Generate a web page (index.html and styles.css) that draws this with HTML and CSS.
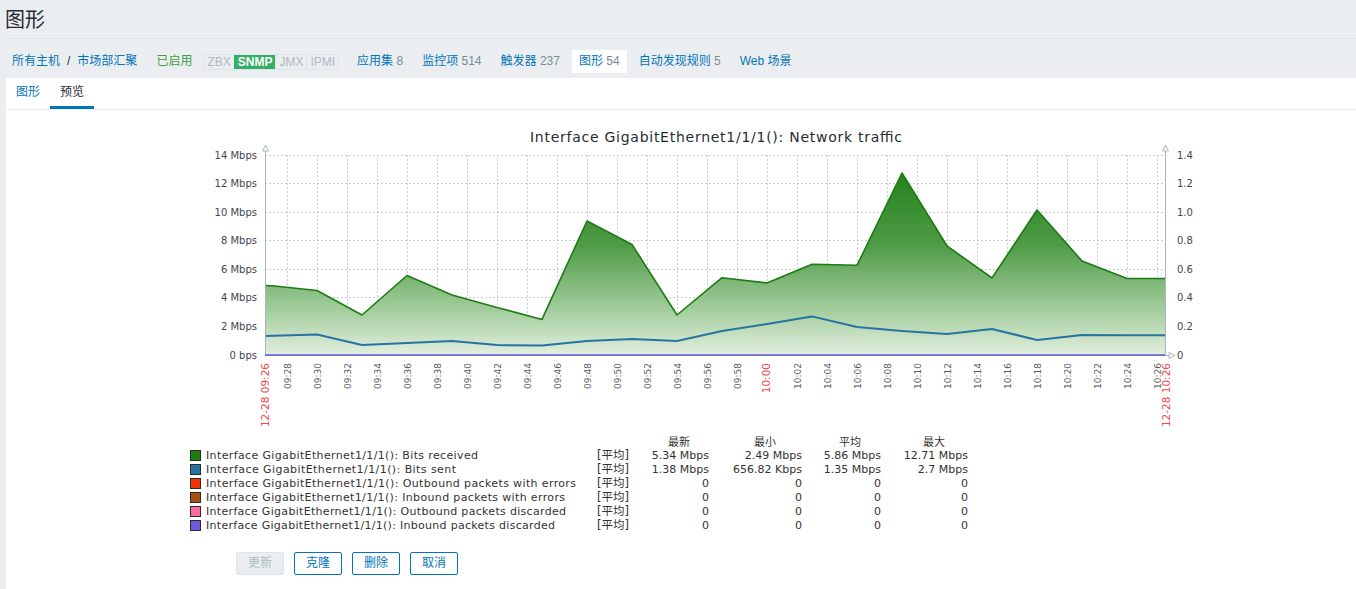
FILE: index.html
```html
<!DOCTYPE html>
<html lang="zh">
<head>
<meta charset="utf-8">
<title>图形</title>
<link rel="stylesheet" href="styles.css">
</head>
<body>
<header class="page-header"><h1>图形</h1></header>
<ul class="host-nav">
  <li class="crumbs"><a href="#">所有主机</a><span class="sep">/</span><a href="#">市场部汇聚</a></li>
  <li><span class="green">已启用</span></li>
  <li class="status-item"><span class="status"><span class="tag">ZBX</span><span class="tag on">SNMP</span><span class="tag">JMX</span><span class="tag">IPMI</span></span></li>
  <li><a href="#">应用集</a> <span class="num">8</span></li>
  <li><a href="#">监控项</a> <span class="num">514</span></li>
  <li><a href="#">触发器</a> <span class="num">237</span></li>
  <li class="active"><a href="#">图形</a> <span class="num">54</span></li>
  <li><a href="#">自动发现规则</a> <span class="num">5</span></li>
  <li><a href="#">Web 场景</a></li>
</ul>
<main class="panel">
  <ul class="tabs">
    <li><a href="#">图形</a></li>
    <li class="current"><span>预览</span></li>
  </ul>
  <div class="graph-wrap">
    <svg class="chart" width="1030" height="423" viewBox="180 112 1030 423" xmlns="http://www.w3.org/2000/svg">
      <defs>
        <linearGradient id="fillGreen" gradientUnits="userSpaceOnUse" x1="0" y1="155" x2="0" y2="355">
          <stop offset="0" stop-color="#1a7c11"/>
          <stop offset="0.45" stop-color="#4f9b47"/>
          <stop offset="0.8" stop-color="#aad1a4"/>
          <stop offset="1" stop-color="#e2efdf"/>
        </linearGradient>
      </defs>
      <text class="g-title" x="716" y="142" text-anchor="middle" textLength="372" lengthAdjust="spacing">Interface GigabitEthernet1/1/1(): Network traffic</text>

      <path class="grid" d="M265 155.5H1165M265 183.5H1165M265 212.5H1165M265 240.5H1165M265 269.5H1165M265 297.5H1165M265 326.5H1165
        M287.5 155V355M317.5 155V355M347.5 155V355M377.5 155V355M407.5 155V355M437.5 155V355M467.5 155V355M497.5 155V355M527.5 155V355M557.5 155V355
        M587.5 155V355M617.5 155V355M647.5 155V355M677.5 155V355M707.5 155V355M737.5 155V355M767.5 155V355M797.5 155V355M827.5 155V355M857.5 155V355
        M887.5 155V355M917.5 155V355M947.5 155V355M977.5 155V355M1007.5 155V355M1037.5 155V355M1067.5 155V355M1097.5 155V355M1127.5 155V355M1157.5 155V355"/>

      <path class="area" d="M265 355L265 285.5L272 285.7L317 290.5L362 315L407 275.5L452 295L497 307.5L542 319.4L587 221L632 244.5L677 315L722 277.7L767 283L812 264.3L857 265.3L902 173L947 246L992 278L1037 210L1082 261L1127 278.5L1165 278.5L1165 355Z"/>
      <polyline class="line-green" points="265,285.5 272,285.7 317,290.5 362,315 407,275.5 452,295 497,307.5 542,319.4 587,221 632,244.5 677,315 722,277.7 767,283 812,264.3 857,265.3 902,173 947,246 992,278 1037,210 1082,261 1127,278.5 1165,278.5"/>
      <polyline class="line-blue" points="265,336 317,334.5 362,345 407,343 452,341 497,345 542,345.6 587,341 632,339 677,341 722,331 767,324 812,316.4 857,327 902,331 947,334 992,329 1037,340 1082,335 1127,335.3 1165,335.3"/>

      <path class="axis" d="M265.5 148V356M1165.5 148V356M265 355.5H1169"/>
      <path class="arrow" d="M262.5 151L265.5 145L268.5 151ZM1162.5 151L1165.5 145L1168.5 151ZM1169 352.5L1175 355.5L1169 358.5Z"/>
      <path class="line-zero" d="M265 355H1165"/>

      <g class="ylab" text-anchor="end">
        <text x="257" y="159">14 Mbps</text>
        <text x="257" y="187">12 Mbps</text>
        <text x="257" y="216">10 Mbps</text>
        <text x="257" y="244">8 Mbps</text>
        <text x="257" y="273">6 Mbps</text>
        <text x="257" y="301">4 Mbps</text>
        <text x="257" y="330">2 Mbps</text>
        <text x="257" y="359">0 bps</text>
      </g>
      <g class="ylab">
        <text x="1177" y="159">1.4</text>
        <text x="1177" y="187">1.2</text>
        <text x="1177" y="216">1.0</text>
        <text x="1177" y="244">0.8</text>
        <text x="1177" y="273">0.6</text>
        <text x="1177" y="301">0.4</text>
        <text x="1177" y="330">0.2</text>
        <text x="1177" y="359">0</text>
      </g>

      <g class="xlab" text-anchor="end">
        <text transform="translate(290.7 363) rotate(-90)">09:28</text>
        <text transform="translate(320.7 363) rotate(-90)">09:30</text>
        <text transform="translate(350.7 363) rotate(-90)">09:32</text>
        <text transform="translate(380.7 363) rotate(-90)">09:34</text>
        <text transform="translate(410.7 363) rotate(-90)">09:36</text>
        <text transform="translate(440.7 363) rotate(-90)">09:38</text>
        <text transform="translate(470.7 363) rotate(-90)">09:40</text>
        <text transform="translate(500.7 363) rotate(-90)">09:42</text>
        <text transform="translate(530.7 363) rotate(-90)">09:44</text>
        <text transform="translate(560.7 363) rotate(-90)">09:46</text>
        <text transform="translate(590.7 363) rotate(-90)">09:48</text>
        <text transform="translate(620.7 363) rotate(-90)">09:50</text>
        <text transform="translate(650.7 363) rotate(-90)">09:52</text>
        <text transform="translate(680.7 363) rotate(-90)">09:54</text>
        <text transform="translate(710.7 363) rotate(-90)">09:56</text>
        <text transform="translate(740.7 363) rotate(-90)">09:58</text>
        <text transform="translate(800.7 363) rotate(-90)">10:02</text>
        <text transform="translate(830.7 363) rotate(-90)">10:04</text>
        <text transform="translate(860.7 363) rotate(-90)">10:06</text>
        <text transform="translate(890.7 363) rotate(-90)">10:08</text>
        <text transform="translate(920.7 363) rotate(-90)">10:10</text>
        <text transform="translate(950.7 363) rotate(-90)">10:12</text>
        <text transform="translate(980.7 363) rotate(-90)">10:14</text>
        <text transform="translate(1010.7 363) rotate(-90)">10:16</text>
        <text transform="translate(1040.7 363) rotate(-90)">10:18</text>
        <text transform="translate(1070.7 363) rotate(-90)">10:20</text>
        <text transform="translate(1100.7 363) rotate(-90)">10:22</text>
        <text transform="translate(1130.7 363) rotate(-90)">10:24</text>
        <text transform="translate(1160.7 363) rotate(-90)">10:26</text>
      </g>
      <g class="xlab-major" text-anchor="end">
        <text transform="translate(269.3 363) rotate(-90)">12-28 09:26</text>
        <text transform="translate(769.8 363) rotate(-90)">10:00</text>
        <text transform="translate(1169.8 363) rotate(-90)">12-28 10:26</text>
      </g>

      <g class="leg-head" text-anchor="middle">
        <text x="679" y="446">最新</text>
        <text x="765" y="446">最小</text>
        <text x="850" y="446">平均</text>
        <text x="934" y="446">最大</text>
      </g>
      <g class="swatches">
        <rect x="190.5" y="450.5" width="10" height="10" fill="#1a7c11"/>
        <rect x="190.5" y="464.5" width="10" height="10" fill="#2774a4"/>
        <rect x="190.5" y="478.5" width="10" height="10" fill="#f63100"/>
        <rect x="190.5" y="492.5" width="10" height="10" fill="#a54f10"/>
        <rect x="190.5" y="506.5" width="10" height="10" fill="#fc6ea3"/>
        <rect x="190.5" y="520.5" width="10" height="10" fill="#6c59dc"/>
      </g>
      <g class="leg">
        <text x="206" y="459" textLength="272" lengthAdjust="spacing">Interface GigabitEthernet1/1/1(): Bits received</text>
        <text x="206" y="473" textLength="250" lengthAdjust="spacing">Interface GigabitEthernet1/1/1(): Bits sent</text>
        <text x="206" y="487" textLength="370" lengthAdjust="spacing">Interface GigabitEthernet1/1/1(): Outbound packets with errors</text>
        <text x="206" y="501" textLength="359" lengthAdjust="spacing">Interface GigabitEthernet1/1/1(): Inbound packets with errors</text>
        <text x="206" y="515" textLength="360" lengthAdjust="spacing">Interface GigabitEthernet1/1/1(): Outbound packets discarded</text>
        <text x="206" y="529" textLength="349" lengthAdjust="spacing">Interface GigabitEthernet1/1/1(): Inbound packets discarded</text>
      </g>
      <g class="leg-fn">
        <text x="597" y="459">[平均]</text>
        <text x="597" y="473">[平均]</text>
        <text x="597" y="487">[平均]</text>
        <text x="597" y="501">[平均]</text>
        <text x="597" y="515">[平均]</text>
        <text x="597" y="529">[平均]</text>
      </g>
      <g class="leg" text-anchor="end">
        <text x="709" y="459">5.34 Mbps</text>
        <text x="802" y="459">2.49 Mbps</text>
        <text x="881" y="459">5.86 Mbps</text>
        <text x="968" y="459">12.71 Mbps</text>
        <text x="709" y="473">1.38 Mbps</text>
        <text x="802" y="473">656.82 Kbps</text>
        <text x="881" y="473">1.35 Mbps</text>
        <text x="968" y="473">2.7 Mbps</text>
        <text x="709" y="487">0</text><text x="802" y="487">0</text><text x="881" y="487">0</text><text x="968" y="487">0</text>
        <text x="709" y="501">0</text><text x="802" y="501">0</text><text x="881" y="501">0</text><text x="968" y="501">0</text>
        <text x="709" y="515">0</text><text x="802" y="515">0</text><text x="881" y="515">0</text><text x="968" y="515">0</text>
        <text x="709" y="529">0</text><text x="802" y="529">0</text><text x="881" y="529">0</text><text x="968" y="529">0</text>
      </g>
    </svg>
  </div>
  <div class="form-buttons">
    <button class="btn" disabled>更新</button>
    <button class="btn">克隆</button>
    <button class="btn">删除</button>
    <button class="btn">取消</button>
  </div>
</main>
</body>
</html>
```
FILE: styles.css
```css
* { box-sizing: border-box; }

body {
  margin: 0;
  background: #ebeef0;
  color: #1f2c33;
  font-family: "Liberation Sans", "Noto Sans CJK SC", sans-serif;
  font-size: 12px;
}

a { color: #0275b8; text-decoration: none; }

.page-header {
  margin-left: 5px;
  height: 39px;
  border-bottom: 1px solid #dfe4e7;
}
.page-header h1 {
  margin: 0;
  font-size: 20px;
  font-weight: normal;
  line-height: 38px;
  color: #1f2c33;
  font-family: "Noto Sans CJK SC", sans-serif;
}

.host-nav {
  list-style: none;
  margin: 0;
  padding: 11px 0 5px 5px;
  display: flex;
  align-items: center;
}
.host-nav li {
  padding: 0 6px;
  margin-right: 5px;
  line-height: 21px;
  border: 1px solid transparent;
  white-space: nowrap;
}
.host-nav li.active {
  background: #fff;
}
.host-nav .sep {
  margin: 0 7px;
  color: #1f2c33;
}
.host-nav .num { color: #768d99; }
.host-nav .green { color: #429e47; }

.host-nav li.status-item {
  padding: 0;
  border: 0;
  margin: 0 11px 0 -1px;
}
.status {
  display: flex;
  border: 1px solid #dfe4e7;
  border-radius: 2px;
}
.tag {
  padding: 0 3px;
  line-height: 14px;
  color: #acbbc2;
  border-left: 1px solid #dfe4e7;
}
.tag:first-child { border-left: 0; }
.tag.on {
  background: #34af67;
  color: #fff;
  font-weight: bold;
  border-left-color: #34af67;
}

.panel {
  margin-left: 6px;
  background: #fff;
  min-height: 520px;
}

.tabs {
  list-style: none;
  margin: 0;
  padding: 0;
  display: flex;
  border-bottom: 1px solid #ebeef0;
}
.tabs li {
  padding: 0 10px;
  line-height: 28px;
  border-bottom: 3px solid transparent;
}
.tabs li.current {
  border-bottom-color: #0275b8;
  color: #1f2c33;
}

.graph-wrap {
  padding-top: 2px;
}
.chart {
  display: block;
  margin-left: 174px;
}

.g-title {
  font: 14px "DejaVu Sans", sans-serif;
  fill: #1f2c33;
}
.grid {
  fill: none;
  stroke: #c6cfd6;
  stroke-width: 1;
  stroke-dasharray: 2 2;
}
.area { fill: url(#fillGreen); stroke: none; }
.line-green {
  fill: none;
  stroke: #1a7c11;
  stroke-width: 1.6;
  stroke-linejoin: round;
}
.line-blue {
  fill: none;
  stroke: #2774a4;
  stroke-width: 2;
  stroke-linejoin: round;
}
.line-zero {
  fill: none;
  stroke: #6c59dc;
  stroke-width: 1.5;
}
.axis { fill: none; stroke: #aab5bd; stroke-width: 1; }
.arrow { fill: #fff; stroke: #aab5bd; stroke-width: 1; }

.ylab text {
  font: 10px "DejaVu Sans", sans-serif;
  fill: #3f474d;
}
.xlab text {
  font: 9px "DejaVu Sans", sans-serif;
  fill: #555d62;
}
.xlab-major text {
  font: 10.5px "DejaVu Sans", sans-serif;
  fill: #f04848;
}
.leg-head text {
  font: 11px "DejaVu Sans", "Noto Sans CJK SC", sans-serif;
  fill: #333;
}
.swatches rect { stroke: #2b2b2b; stroke-width: 1; }
.leg text {
  font: 11px "DejaVu Sans", sans-serif;
  fill: #333;
}
.leg-fn text {
  font: 11.5px "DejaVu Sans", "Noto Sans CJK SC", sans-serif;
  fill: #333;
}

.form-buttons {
  display: flex;
  gap: 10px;
  padding: 17px 0 20px 230px;
}
.btn {
  height: 23px;
  padding: 0 11px;
  font-family: "Liberation Sans", "Noto Sans CJK SC", sans-serif;
  font-size: 12px;
  line-height: 21px;
  color: #0275b8;
  background: #fff;
  border: 1px solid #0275b8;
  border-radius: 2px;
}
.btn:disabled {
  color: #acbbc2;
  background: #ebeef0;
  border-color: #dfe4e7;
}
```
